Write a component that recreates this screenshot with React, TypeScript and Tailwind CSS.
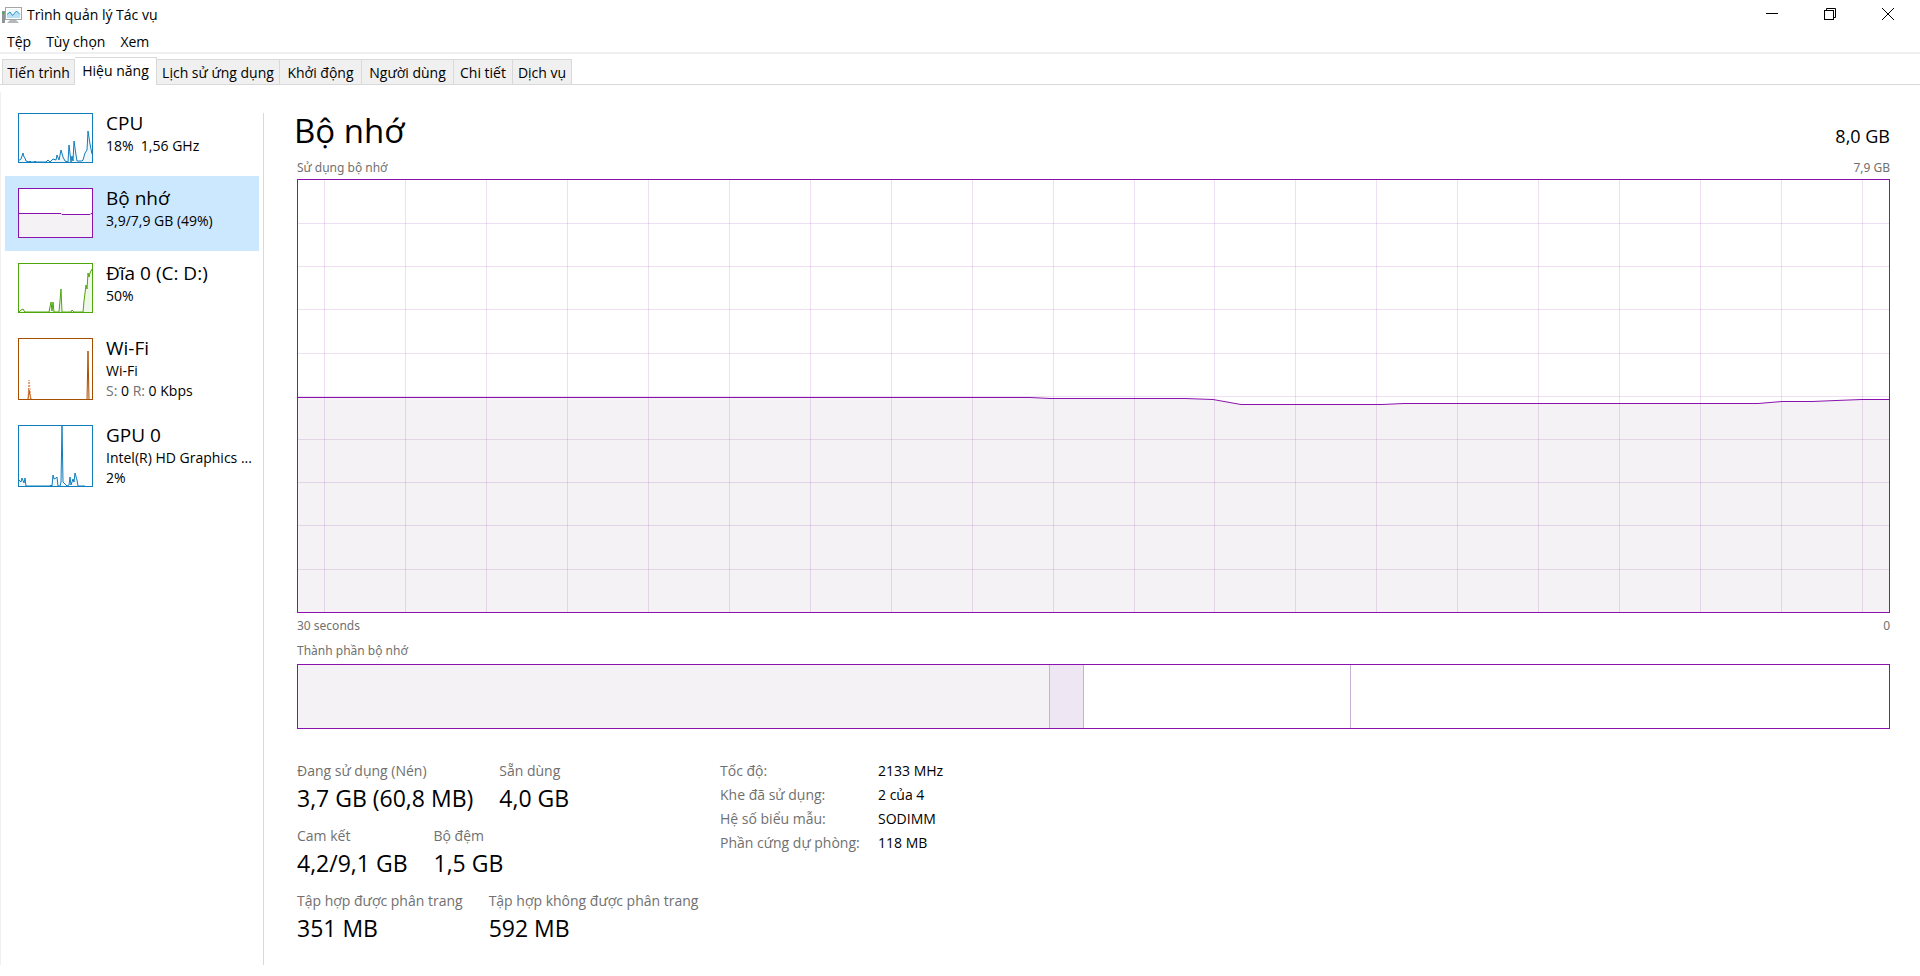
import React from 'react';

interface SidebarItem {
  title: string;
  lines: React.ReactNode[];
  height: number;
  stroke: string;
  fill: string;
  points: string;
  // second series, drawn dashed (network receive)
  dashed?: string;
  active?: boolean;
}

const menus = ['Tệp', 'Tùy chọn', 'Xem'];

const tabs = [
  { label: 'Tiến trình', width: 'w-[73px]' },
  { label: 'Hiệu năng', width: 'w-[82px]' },
  { label: 'Lịch sử ứng dụng', width: 'w-[123px]' },
  { label: 'Khởi động', width: 'w-[82px]' },
  { label: 'Người dùng', width: 'w-[92px]' },
  { label: 'Chi tiết', width: 'w-[59px]' },
  { label: 'Dịch vụ', width: 'w-[59px]' },
];

const items: SidebarItem[] = [
  {
    title: 'CPU',
    lines: ['18%  1,56 GHz'],
    height: 50,
    stroke: '#117dbb',
    fill: '#f1f6fa',
    points:
      '0,48 3,46 5,40 6,44 7,45 8,48 11,49 12,48 13,49 16,49 17,48 18,49 28,49 30,47 32,49 35,46 38,47 39,42 41,47 43,37 45,44 47,48 50,49 51,32 53,49 54,43 55,48 56,28 58,42 59,48 64,48 65,47 67,40 69,37 70,18 72,31 74,41',
  },
  {
    title: 'Bộ nhớ',
    lines: ['3,9/7,9 GB (49%)'],
    height: 50,
    stroke: '#8b12ae',
    fill: '#f4f2f4',
    points: '0,25.5 43,25.5 44,26.5 72,26.5 73,25.5 75,25.5',
    active: true,
  },
  {
    title: 'Đĩa 0 (C: D:)',
    lines: ['50%'],
    height: 50,
    stroke: '#4da60c',
    fill: '#eff7e9',
    points:
      '1,49 3,47 5,46 7,49 31,49 33,39 34,48 35,39 36,49 41,49 43,26 44,49 53,49 54,47 56,49 65,49 66,38 68,22 69,26 70,10 71,14 72,10 73,8 74,6',
  },
  {
    title: 'Wi-Fi',
    lines: [
      'Wi-Fi',
      <>
        <span className="text-[#707070]">S:</span> 0 <span className="text-[#707070]">R:</span> 0 Kbps
      </>,
    ],
    height: 62,
    stroke: '#a74f01',
    fill: '#fcf3eb',
    points: '0,62 10,62 11,52 13,62 69,62 70,13 71,62 75,62',
    dashed: '10,61 11,42 13,61',
  },
  {
    title: 'GPU 0',
    lines: ['Intel(R) HD Graphics ...', '2%'],
    height: 62,
    stroke: '#117dbb',
    fill: '#f1f6fa',
    points:
      '0,59 1,55 3,57 4,53 6,58 7,53 8,61 32,61 33,60 34,61 35,50 36,54 38,53 39,52 40,61 42,61 43,57 44,1 45,57 47,59 49,61 51,60 52,52 53,60 55,54 56,57 57,48 59,55 60,61 67,61',
  },
];

const verticals = Array.from({ length: 20 }, (_, i) => Math.round(27 + i * 80.95) + 0.5);
const horizontals = Array.from({ length: 9 }, (_, i) => Math.round(44 + i * 43.2) + 0.5);
const usage =
  '0,218.5 733,218.5 753,219.5 888,219.5 916,220.5 944,225.5 1085,225.5 1107,224.5 1461,224.5 1485,222.5 1515,222.5 1539,221.5 1565,220.5 1593,220.5';

const stats = [
  [
    { label: 'Đang sử dụng (Nén)', value: '3,7 GB (60,8 MB)' },
    { label: 'Sẵn dùng', value: '4,0 GB' },
  ],
  [
    { label: 'Cam kết', value: '4,2/9,1 GB' },
    { label: 'Bộ đệm', value: '1,5 GB' },
  ],
  [
    { label: 'Tập hợp được phân trang', value: '351 MB' },
    { label: 'Tập hợp không được phân trang', value: '592 MB' },
  ],
];

const details = [
  ['Tốc độ:', '2133 MHz'],
  ['Khe đã sử dụng:', '2 của 4'],
  ['Hệ số biểu mẫu:', 'SODIMM'],
  ['Phần cứng dự phòng:', '118 MB'],
];

const AppIcon: React.FC = () => (
  <svg width="20" height="18" viewBox="0 0 20 18" aria-hidden="true">
    <rect x="0" y="5" width="3" height="12" fill="#8f9498" />
    <rect x="0.5" y="6" width="2" height="2" fill="#3fae49" />
    <path d="M8 14h6l3 3H5z" fill="#b4b8bb" />
    <rect x="3.5" y="1.5" width="16" height="12" fill="#fff" stroke="#a3a7aa" />
    <rect x="5" y="3" width="13" height="9" fill="#f0fafe" />
    <path d="M5 9l3-3 2.500 3.500 4-4.500 3.500 4v3H5z" fill="#b7e2f6" />
    <path d="M5 8.500l3-2.500 2.500 3.500 4-4.500 3.500 3.500" fill="none" stroke="#2f8fc4" />
  </svg>
);

const MiniGraph: React.FC<{ item: SidebarItem }> = ({ item }) => (
  <svg className="shrink-0" width="75" height={item.height} viewBox={`0 0 75 ${item.height}`} aria-hidden="true">
    <rect width="75" height={item.height} fill="#fff" />
    <polygon points={`0,${item.height} ${item.points} 75,${item.height}`} fill={item.fill} />
    <polyline points={item.points} fill="none" stroke={item.stroke} />
    {item.dashed && <polyline points={item.dashed} fill="none" stroke="#e08a5a" strokeDasharray="2 1" />}
    <rect x="0.5" y="0.5" width="74" height={item.height - 1} fill="none" stroke={item.stroke} />
  </svg>
);

const TitleBar: React.FC = () => (
  <header className="flex h-[30px] items-center justify-between pl-[2px] pr-[3px]">
    <div className="flex items-center gap-[5px]">
      <AppIcon />
      <h1>Trình quản lý Tác vụ</h1>
    </div>
    <div className="flex self-start">
      <button type="button" aria-label="Thu nhỏ" className="flex h-7 w-[58px] items-center justify-center">
        <svg width="12" height="12" viewBox="0 0 12 12">
          <path d="M0 5.500h12" stroke="#000" />
        </svg>
      </button>
      <button type="button" aria-label="Khôi phục" className="flex h-7 w-[58px] items-center justify-center">
        <svg width="12" height="12" viewBox="0 0 12 12" fill="none" stroke="#000">
          <rect x="0.5" y="2.500" width="9" height="9" />
          <path d="M2.500 2.500v-2h9v9h-2" />
        </svg>
      </button>
      <button type="button" aria-label="Đóng" className="flex h-7 w-[58px] items-center justify-center">
        <svg width="12" height="12" viewBox="0 0 12 12" stroke="#000">
          <path d="M0 0l12 12M12 0L0 12" />
        </svg>
      </button>
    </div>
  </header>
);

const Sidebar: React.FC = () => (
  <aside className="w-[259px] shrink-0 border-l border-[#f0f0f0] pl-1 pt-[9px]">
    {items.map((item) => (
      <button
        key={item.title}
        type="button"
        className={`flex w-full items-start gap-[13px] pb-[13px] pl-[13px] pt-3 text-left ${item.active ? 'bg-[#cce8ff]' : ''}`}
      >
        <MiniGraph item={item} />
        <span className="-mb-2 -mt-[3px] flex min-w-0 flex-col">
          <span className="text-[19px] leading-[26px]">{item.title}</span>
          {item.lines.map((line, i) => (
            <span key={i} className="whitespace-pre leading-5">
              {line}
            </span>
          ))}
        </span>
      </button>
    ))}
  </aside>
);

const UsageChart: React.FC = () => (
  <svg
    className="block h-[434px] w-full border border-[#8b12ae]"
    viewBox="1 1 1591 432"
    preserveAspectRatio="none"
    role="img"
    aria-label="Sử dụng bộ nhớ"
  >
    <polygon points={`0,434 ${usage} 1593,434`} fill="#f4f2f4" />
    <g stroke="#8a2aa6" strokeOpacity="0.15">
      {verticals.map((x) => (
        <line key={x} x1={x} x2={x} y1="0" y2="434" />
      ))}
      {horizontals.map((y) => (
        <line key={y} x1="0" x2="1593" y1={y} y2={y} />
      ))}
    </g>
    <polyline points={usage} fill="none" stroke="#8b12ae" />
  </svg>
);

const Composition: React.FC = () => (
  <div className="flex h-[65px] border border-[#8b12ae]">
    <div className="w-[47.250%] border-r border-[#cbb0d6] bg-[#f4f2f4]" />
    <div className="w-[2.130%] border-r border-[#cbb0d6] bg-[#eee6f2]" />
    <div className="w-[16.780%] border-r border-[#cbb0d6]" />
  </div>
);

export default function App() {
  return (
    <div className="flex min-h-screen flex-col bg-white font-['Open_Sans','Noto_Sans',sans-serif] text-[14px] leading-5 text-black">
      <TitleBar />
      <nav className="flex h-6 items-center gap-[15px] border-b-2 border-[#f0f0f0] pl-[7px] pt-0.5">
        {menus.map((menu) => (
          <button key={menu} type="button">
            {menu}
          </button>
        ))}
      </nav>
      <div role="tablist" className="flex h-[31px] items-end border-b border-[#d9d9d9] pl-[2px]">
        {tabs.map(({ label, width }) => (
          <button
            key={label}
            type="button"
            role="tab"
            aria-selected={label === 'Hiệu năng'}
            className={`${width} whitespace-nowrap border-r border-t border-[#d9d9d9] ${
              label === 'Hiệu năng' ? '-mb-px h-7 bg-white pb-0.5' : 'h-[25px] bg-[#f0f0f0] pt-0.5 first:border-l'
            }`}
          >
            {label}
          </button>
        ))}
      </div>
      <div className="flex flex-1 pb-[11px] pt-[7px]">
        <Sidebar />
        <main className="ml-1 mt-[21px] min-w-0 flex-1 border-l border-[#d9d9d9] pl-[33px] pr-[30px]">
          <div className="-ml-[3px] flex items-baseline justify-between pb-[9px]">
            <h2 className="text-[33px] leading-9">Bộ nhớ</h2>
            <span className="text-[18px]">8,0 GB</span>
          </div>
          <div className="flex justify-between pb-px font-['Noto_Sans',sans-serif] text-[12px] text-[#707070]">
            <span>Sử dụng bộ nhớ</span>
            <span>7,9 GB</span>
          </div>
          <UsageChart />
          <div className="flex justify-between pt-[3px] font-['Noto_Sans',sans-serif] text-[12px] text-[#707070]">
            <span>30 seconds</span>
            <span>0</span>
          </div>
          <p className="pb-[3px] pt-[5px] font-['Noto_Sans',sans-serif] text-[12px] text-[#707070]">Thành phần bộ nhớ</p>
          <Composition />
          <div className="flex pt-[30px]">
            <div className="flex w-[423px] flex-col gap-[10px] pt-0.5">
              {stats.map((row) => (
                <dl key={row[0].label} className="flex gap-[26px]">
                  {row.map((stat) => (
                    <div key={stat.label} className="whitespace-nowrap">
                      <dt className="text-[#707070]">{stat.label}</dt>
                      <dd className="text-[23px] leading-[35px]">{stat.value}</dd>
                    </div>
                  ))}
                </dl>
              ))}
            </div>
            <dl>
              {details.map(([label, value]) => (
                <div key={label} className="flex leading-6">
                  <dt className="w-[158px] text-[#707070]">{label}</dt>
                  <dd>{value}</dd>
                </div>
              ))}
            </dl>
          </div>
        </main>
      </div>
    </div>
  );
}
